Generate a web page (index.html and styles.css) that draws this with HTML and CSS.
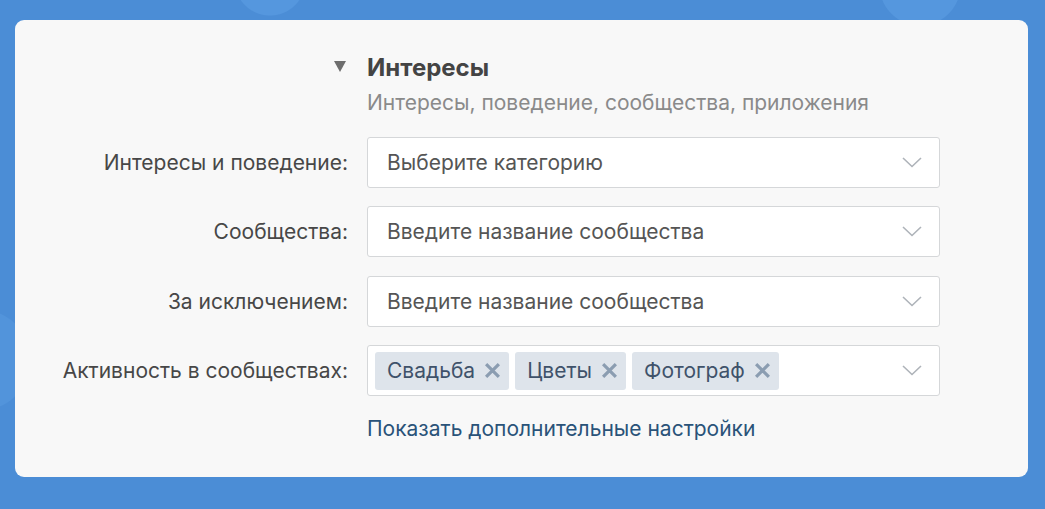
FILE: index.html
```html
<!DOCTYPE html>
<html>
<head>
    <meta charset="UTF-8">
    <title>Интересы</title>
    <link rel="stylesheet" href="styles.css">
</head>
<body>
    <div class="card">
        <div class="form">
            <div class="toggle"><span class="tri"></span></div>
            <div class="head">
                <div class="title">Интересы</div>
                <div class="sub">Интересы, поведение, сообщества, приложения</div>
            </div>

            <div class="label">Интересы и поведение:</div>
            <div class="select">
                <span class="ph">Выберите категорию</span>
                <svg class="chev" width="20" height="11" viewBox="0 0 20 11"><path d="M1 1 L10 9.5 L19 1" fill="none" stroke="#aeb3b9" stroke-width="1.6"/></svg>
            </div>

            <div class="label">Сообщества:</div>
            <div class="select">
                <span class="ph">Введите название сообщества</span>
                <svg class="chev" width="20" height="11" viewBox="0 0 20 11"><path d="M1 1 L10 9.5 L19 1" fill="none" stroke="#aeb3b9" stroke-width="1.6"/></svg>
            </div>

            <div class="label">За исключением:</div>
            <div class="select">
                <span class="ph">Введите название сообщества</span>
                <svg class="chev" width="20" height="11" viewBox="0 0 20 11"><path d="M1 1 L10 9.5 L19 1" fill="none" stroke="#aeb3b9" stroke-width="1.6"/></svg>
            </div>

            <div class="label">Активность в сообществах:</div>
            <div class="select tags">
                <span class="tag">Свадьба <svg class="x" width="17" height="17" viewBox="0 0 16 16"><path d="M2 2 L14 14 M14 2 L2 14" stroke="#8b9db1" stroke-width="3"/></svg></span>
                <span class="tag">Цветы <svg class="x" width="17" height="17" viewBox="0 0 16 16"><path d="M2 2 L14 14 M14 2 L2 14" stroke="#8b9db1" stroke-width="3"/></svg></span>
                <span class="tag">Фотограф <svg class="x" width="17" height="17" viewBox="0 0 16 16"><path d="M2 2 L14 14 M14 2 L2 14" stroke="#8b9db1" stroke-width="3"/></svg></span>
                <svg class="chev" width="20" height="11" viewBox="0 0 20 11"><path d="M1 1 L10 9.5 L19 1" fill="none" stroke="#aeb3b9" stroke-width="1.6"/></svg>
            </div>

            <div></div>
            <a class="more" href="#">Показать дополнительные настройки</a>
        </div>
    </div>
</body>
</html>
```

FILE: styles.css
```css
html, body {
    margin: 0;
    height: 100%;
}

body {
    background-color: #4b8dd6;
    background-image:
        radial-gradient(circle at 270px -20px, #5597de 0, #5597de 35px, transparent 36px),
        radial-gradient(circle at 920px -15px, #5597de 0, #5597de 40px, transparent 41px),
        radial-gradient(circle at -20px 360px, #5294db 0, #5294db 50px, transparent 51px);
    font-family: "Inter", "Roboto", "Liberation Sans", sans-serif;
    padding-top: 20px;
    box-sizing: border-box;
}

.card {
    width: 1013px;
    height: 457px;
    margin-left: 15px;
    background: #f8f8f8;
    border-radius: 9px;
    box-sizing: border-box;
    padding-top: 34px;
}

.form {
    display: grid;
    grid-template-columns: 333px 573px;
    column-gap: 19px;
    row-gap: 18.5px;
    align-items: center;
}

.toggle {
    align-self: start;
    display: flex;
    justify-content: flex-end;
    padding-top: 7px;
    padding-right: 2px;
}

.tri {
    width: 0;
    height: 0;
    border-left: 6px solid transparent;
    border-right: 6px solid transparent;
    border-top: 11px solid #6e6e6e;
}

.head {
    padding-bottom: 2px;
}

.title {
    font-size: 24px;
    font-weight: 700;
    color: #444;
    line-height: 28px;
}

.sub {
    margin-top: 8px;
    font-size: 21px;
    color: #8a8a8a;
    line-height: 26px;
}

.label {
    text-align: right;
    font-size: 21px;
    color: #474747;
}

.select {
    height: 51px;
    box-sizing: border-box;
    border: 1px solid #d5d7d9;
    border-radius: 3px;
    background: #fff;
    display: flex;
    align-items: center;
    padding: 0 17px 0 19px;
}

.ph {
    flex: 1;
    font-size: 21px;
    color: #555;
}

.chev {
    margin-left: auto;
}

.tags {
    padding-left: 7px;
    gap: 6px;
}

.tag {
    height: 38px;
    display: flex;
    align-items: center;
    gap: 9px;
    padding: 0 8px 0 12px;
    background: #dee4eb;
    border-radius: 3px;
    font-size: 21px;
    color: #3f526a;
}

.more {
    margin-top: 1px;
    font-size: 21px;
    line-height: 25px;
    color: #2a5379;
    text-decoration: none;
}
```
